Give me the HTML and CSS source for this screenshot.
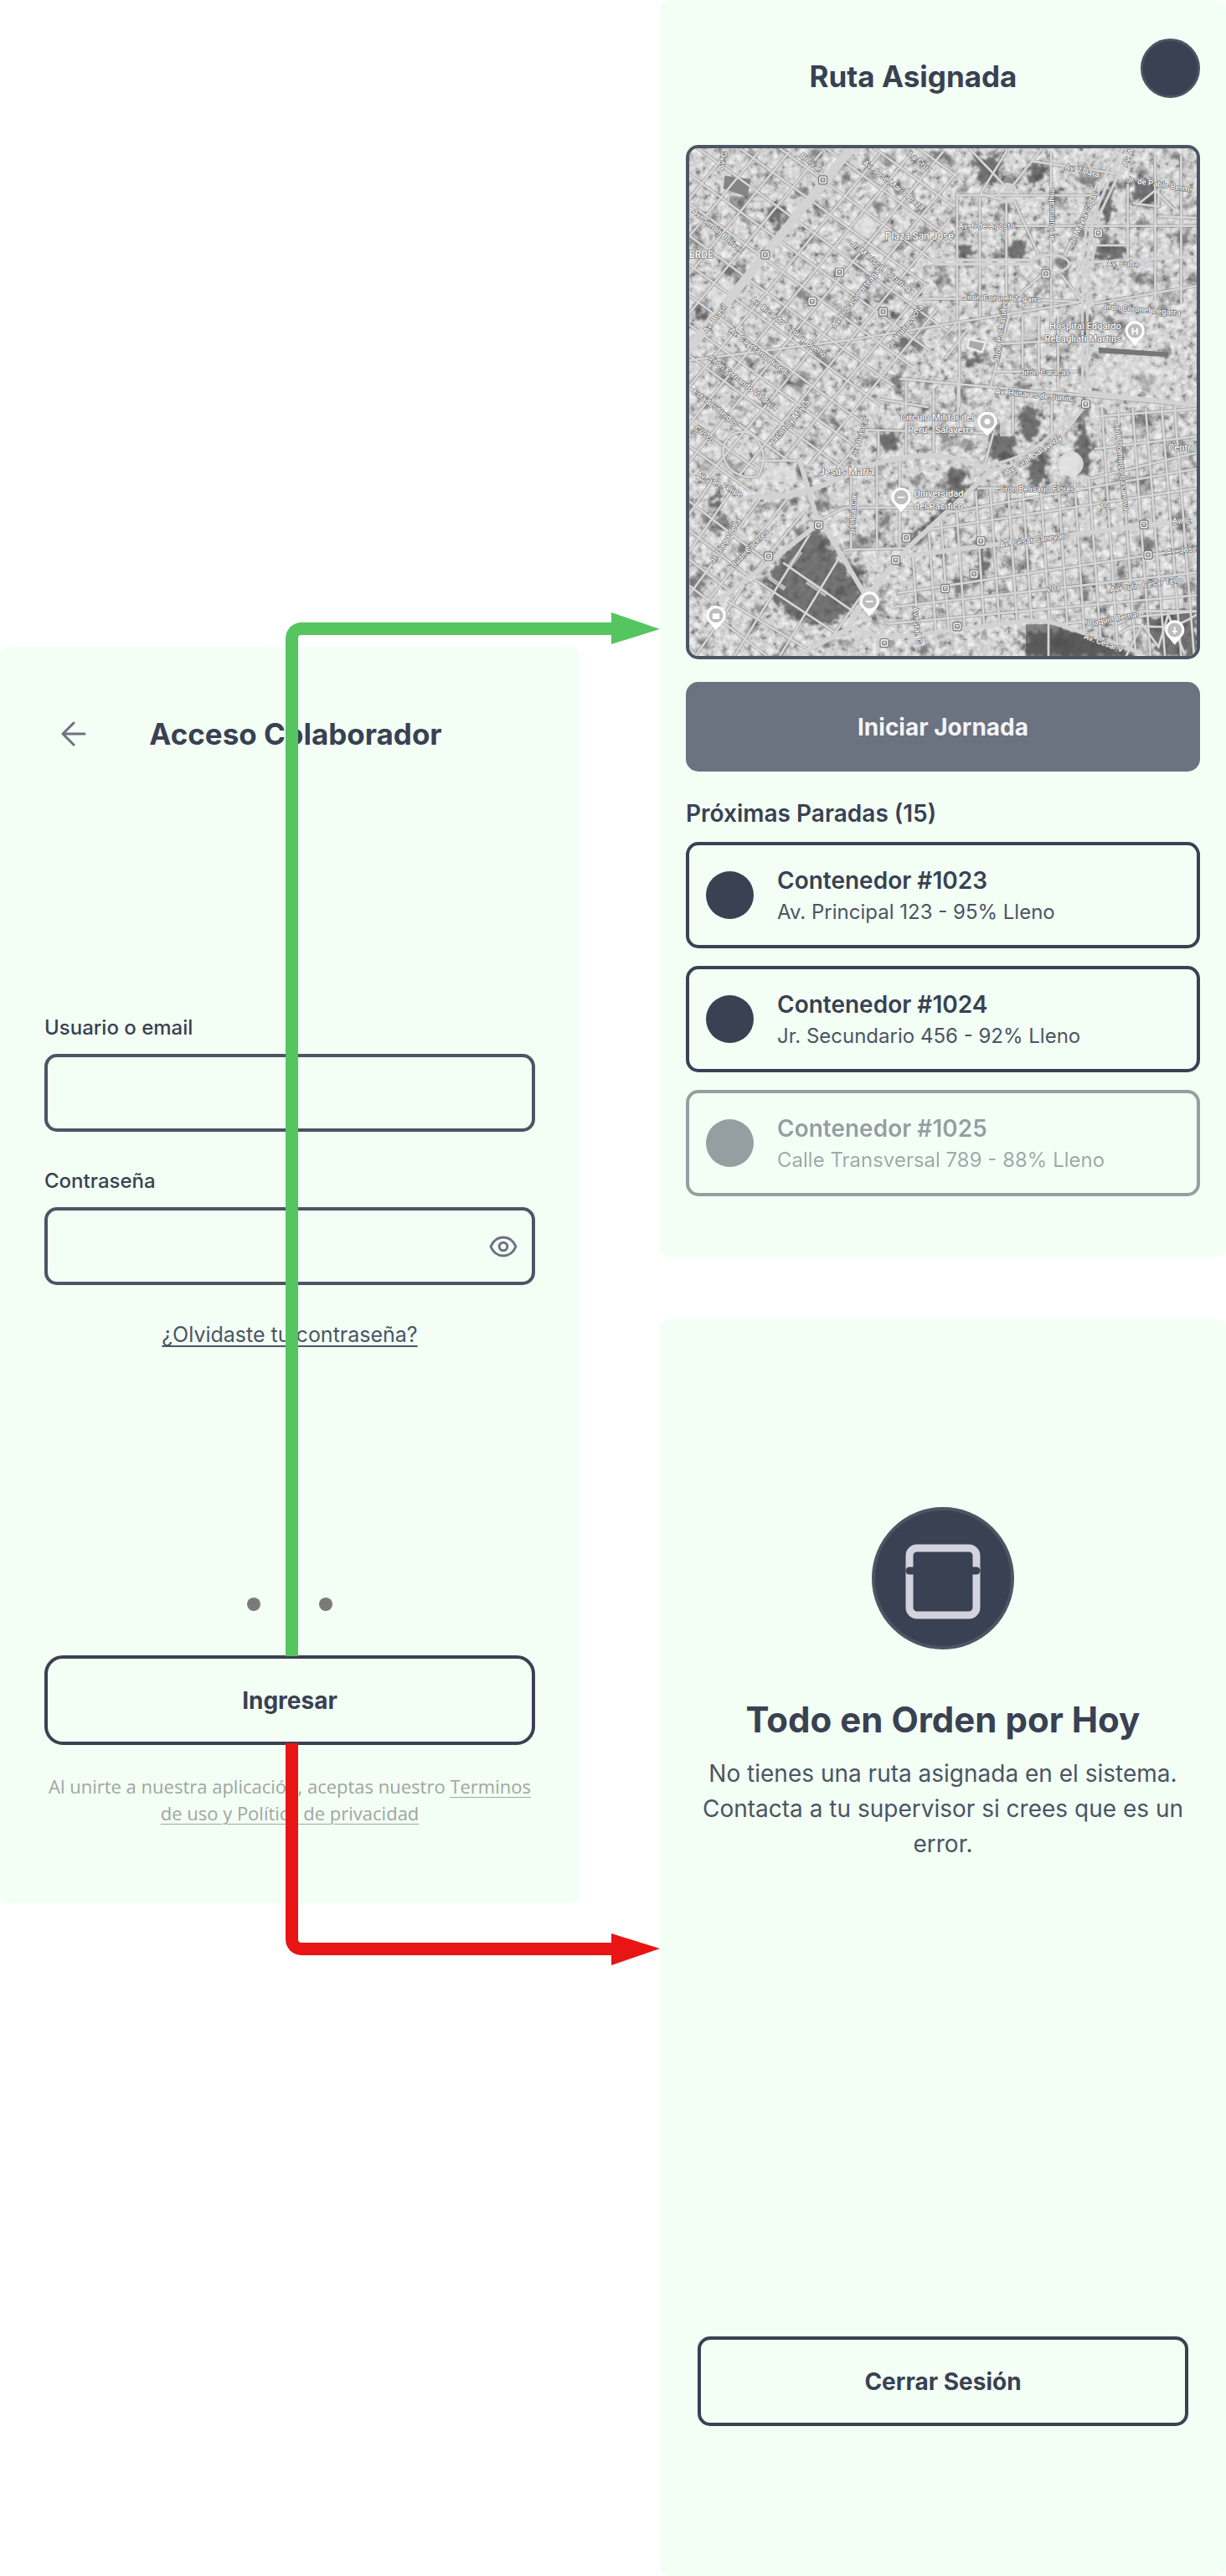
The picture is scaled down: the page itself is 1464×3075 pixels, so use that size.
FILE: index.html
```html
<!DOCTYPE html>
<html lang="es">
<head>
<meta charset="utf-8">
<meta name="viewport" content="width=device-width, initial-scale=1">
<title>Flujo de acceso del colaborador</title>
<link rel="stylesheet" href="styles.css">
</head>
<body>
<main class="flow">
  <div class="column column-start">
    <section class="screen login">
      <header class="login-header">
        <button class="back" type="button" aria-label="Volver">
          <svg width="30" height="30" viewBox="0 0 30 30" fill="none" stroke="currentColor" stroke-width="3" stroke-linecap="round" stroke-linejoin="round"><path d="M28 15H2M15 28L2 15L15 2"/></svg>
        </button>
        <h1 class="title">Acceso Colaborador</h1>
      </header>
      <form class="form">
        <div class="field">
          <label class="label" for="user">Usuario o email</label>
          <input class="input" id="user" type="text">
        </div>
        <div class="field">
          <label class="label" for="pass">Contraseña</label>
          <div class="password">
            <input class="input" id="pass" type="password">
            <button class="eye" type="button" aria-label="Mostrar contraseña">
              <svg width="34" height="26" viewBox="0 0 34 26" fill="none" stroke="currentColor" stroke-width="3"><path d="M2 13C5 6 10.500 2 17 2S29 6 32 13C29 20 23.500 24 17 24S5 20 2 13Z" stroke-linejoin="round"/><circle cx="17" cy="13" r="4.800"/></svg>
            </button>
          </div>
        </div>
        <a class="forgot" href="#">¿Olvidaste tu contraseña?</a>
      </form>
      <div class="login-footer">
        <div class="dots"><span class="dot"></span><span class="dot"></span></div>
        <div class="action">
          <button class="button button-outline button-round" type="submit">Ingresar</button>
          <div class="link link-up"></div>
          <svg class="head head-up" width="58" height="38" viewBox="0 0 58 38"><path d="M0 0L58 20L0 38Z" fill="#55c560"/></svg>
          <div class="link link-down"></div>
          <svg class="head head-down" width="58" height="38" viewBox="0 0 58 38"><path d="M0 0L58 18L0 38Z" fill="#e91414"/></svg>
        </div>
        <p class="terms">Al unirte a nuestra aplicación, aceptas nuestro <a href="#">Terminos de uso y Política de privacidad</a></p>
      </div>
    </section>
  </div>

  <div class="column column-end">
    <section class="screen route">
      <header class="route-header">
        <h2 class="title">Ruta Asignada</h2>
        <span class="avatar"></span>
      </header>
      <div class="map">
        <svg viewBox="0 0 1568 1568" role="img" aria-label="Mapa de la ruta">
          <defs>
            <filter id="roofs" x="0" y="0" width="100%" height="100%" color-interpolation-filters="sRGB">
              <feTurbulence type="fractalNoise" baseFrequency="0.05" numOctaves="3" seed="8"/>
              <feColorMatrix values="1 0 0 0 0 1 0 0 0 0 1 0 0 0 0 0 0 0 0 1"/>
              <feComponentTransfer>
                <feFuncR type="table" tableValues=".4 .45 .55 .7 .79 .83 .87 .91 .94 .95 .95"/>
                <feFuncG type="table" tableValues=".4 .45 .55 .7 .79 .83 .87 .91 .94 .95 .95"/>
                <feFuncB type="table" tableValues=".4 .45 .55 .7 .79 .83 .87 .91 .94 .95 .95"/>
              </feComponentTransfer>
            </filter>
            <filter id="trees" x="0" y="0" width="100%" height="100%" color-interpolation-filters="sRGB">
              <feTurbulence type="fractalNoise" baseFrequency="0.016" numOctaves="4" seed="21"/>
              <feColorMatrix values="0 0 0 0 .3 0 0 0 0 .3 0 0 0 0 .3 5 0 0 0 -2.9"/>
            </filter>
            <filter id="rough" x="-10%" y="-10%" width="120%" height="120%">
              <feTurbulence type="fractalNoise" baseFrequency="0.05" numOctaves="3" seed="4"/>
              <feDisplacementMap in="SourceGraphic" scale="60" xChannelSelector="R" yChannelSelector="G"/>
              <feGaussianBlur stdDeviation="3"/>
            </filter>
            <clipPath id="west"><path d="M0 0H815L835 130L760 330L720 460L835 540L640 720L470 990L340 970L220 960L190 1060L0 1000Z"/></clipPath>
            <clipPath id="east"><path d="M780 1140L900 1050L1240 1020L1270 790L1568 800V1568H1420L1120 1460L600 1510L680 1260Z"/></clipPath>
            <clipPath id="southwest"><path d="M0 1000L190 1070L300 1080L400 1150L90 1390L0 1420Z"/></clipPath>
            <clipPath id="campus"><path d="M390 1180L550 1380L480 1500L300 1568H0V1450L110 1400Z"/></clipPath>
            <g id="pin"><path d="M0 40L-20 16A30 30 0 1 1 20 16Z" fill="#fff"/><circle cy="-6" r="22" fill="#bdbdbd"/></g>
            <g id="stop"><rect x="-13" y="-13" width="26" height="26" rx="6" fill="#f2f2f2" stroke="#777" stroke-width="3"/><rect x="-6" y="-6" width="12" height="12" rx="2" fill="none" stroke="#777" stroke-width="3"/><path d="M-6 1H6" stroke="#777" stroke-width="2"/></g>
            <g id="streets" fill="none">
              <g clip-path="url(#west)">
                <path d="M120 10L-700 1010M215 10L-605 1010M310 10L-510 1010M410 10L-410 1010M595 10L-225 1010M690 10L-130 1010M785 10L-35 1010M880 10L60 1010M975 10L155 1010M1070 10L250 1010M1165 10L345 1010M1260 10L440 1010"/>
                <path d="M0 -520L900 140M0 -420L900 240M0 -310L900 350M0 -205L900 455M0 -115L900 545M0 -20L900 640M0 80L900 740M0 170L900 830M0 270L900 930M0 360L900 1020M0 455L900 1115M0 545L900 1205M0 640L900 1300M0 740L900 1400M0 840L900 1500M0 920L900 1580"/>
              </g>
              <g clip-path="url(#east)">
                <path d="M600 1200L1568 1050M600 1160L1568 990M600 1380L1568 1235M600 1420L1568 1310M600 1470L1568 1380M1240 830L1568 805M1240 930L1568 890M1240 1020L1568 940M600 1520L1568 1430"/>
                <path d="M680 1100L712 1568M735 1100L767 1568M775 1100L807 1568M825 1100L857 1568M885 1050L917 1568M930 1050L965 1568M985 1050L1020 1568M1030 1040L1065 1568M1085 1030L1120 1568M1140 1030L1175 1568M1190 1020L1225 1568M1235 1020L1275 1568M1275 800L1325 1568M1325 800L1380 1568M1370 800L1425 1568M1410 800L1470 1568M1460 800L1520 1568M1500 800L1560 1568"/>
              </g>
              <g clip-path="url(#southwest)">
                <path d="M90 1000L-200 1420M170 1000L-120 1420M250 1040L-30 1420M320 1060L40 1420M390 1080L110 1420M0 1090L400 1400M0 1180L400 1490M0 1270L400 1580M0 1350L400 1660"/>
              </g>
              <g clip-path="url(#campus)">
                <path d="M200 1330L560 1568M290 1280L520 1440M120 1400L400 1568M60 1430L240 1568M380 1180L140 1568M460 1270L280 1568M540 1370L400 1568M240 1250L20 1568"/>
              </g>
              <path d="M828 145H1250M828 240H1568M980 10V0M828 10V0M828 140V530M898 150V520M980 160V460M1118 10V520M1355 110V350M1440 20V470M1520 20V480M1250 480L1568 425M1250 300H1350M1450 210L1568 215"/>
              <path d="M865 0L970 110M1090 0L1000 115M1005 165L1080 330M970 160L900 140M1150 390L1210 470M1090 390L1010 460M1160 330L1260 110M980 10L900 140M1060 40L1330 80M720 465H1000L1210 475M860 560L790 650M950 605L1200 590M1030 520V680M1080 520V690M1140 520V740M990 510L930 740M940 690H1200M835 540V800"/>
              <path d="M0 655L510 590L1210 475M650 712L1568 795M670 720V960M755 740V940M830 720V870M590 775L740 800M550 870L920 880M585 870V960M650 960V1240M940 880L915 970M580 960V1240M500 1010V1240M480 1240L680 1235M480 1110H760M890 1050L1220 1050M400 1150L480 1110M1120 760V900M1000 760V880"/>
              <path d="M105 930C110 880 170 860 200 890S240 960 215 1010C180 1030 100 1000 105 930ZM215 965H340"/>
              <path d="M1320 1470L1400 1430L1568 1430M1330 1500C1400 1440 1450 1520 1568 1440M1350 1568L1400 1470L1450 1540L1480 1440L1530 1560M1110 1460V1568M1390 170L1440 130L1500 190M1370 170L1450 180V90"/>
            </g>
            <g id="avenues" fill="none">
              <path d="M500 0L0 620" stroke-width="28"/>
              <path d="M760 345H1060M760 358H1060M1170 355L1568 335" stroke-width="9"/>
              <path d="M1340 0L1245 220L1230 350V480M1320 0L1230 220L1215 350V760M1365 0L1270 200L1245 350M1230 480V760" stroke-width="8"/>
              <path d="M190 1075C280 1085 360 1065 440 1030S600 955 710 950S860 970 930 995" stroke-width="16"/>
              <path d="M920 980C1040 960 1140 890 1210 770M925 998C1060 970 1150 910 1225 790" stroke-width="9"/>
              <path d="M90 1400L400 1160M400 1160L340 960M400 1140L550 1390M550 1380L680 1230L930 1000M680 1258L1568 1145M480 1500L550 1380M330 1568L500 1480L600 1515" stroke-width="15"/>
              <path d="M600 1515L1040 1460Q1120 1455 1200 1490L1400 1560M1200 750L1568 795" stroke-width="13"/>
              <circle cx="983" cy="138" r="27" stroke-width="8"/>
              <ellipse cx="1115" cy="357" rx="58" ry="28" stroke-width="8"/>
            </g>
          </defs>
          <rect width="1568" height="1568" filter="url(#roofs)"/>
          <rect width="1568" height="1568" filter="url(#trees)" opacity=".6"/>
          <g fill="#4c4c4c" fill-opacity=".72" filter="url(#rough)">
            <path d="M350 1190L400 1165L450 1260L540 1360L500 1430L420 1480L300 1440L230 1340Z"/>
            <path d="M250 180H290V240H250ZM870 20L960 20V110H900ZM1050 40L1100 60L1060 130ZM830 300H880V340H830ZM990 290H1040V345H990ZM1260 290H1340V345H1260ZM1280 130L1310 110V220H1270ZM1370 100H1440L1450 170L1380 180Z"/>
            <path d="M1040 1490H1200L1380 1568H1040ZM1400 1450L1568 1420V1568H1450ZM930 880H1010V970H930ZM590 880H645V930H590ZM1200 840H1235V1010H1200ZM1050 960H1100V1040H1050ZM800 990H850V1060H800ZM890 1240H925V1320H890ZM1020 800H1080V900H1020ZM340 970L380 1030V1050L340 1010Z"/>
            <path d="M620 500L655 520L630 535ZM640 590H680V620H640ZM850 640H910V670H850ZM20 500H60V530H20ZM60 1080H100V1120H60ZM100 340L150 380L120 400ZM860 1040L900 1030L700 1210L690 1190ZM470 1230L540 1330L520 1350Z"/>
          </g>
          <path d="M1040 1490V1568H1380L1200 1500L1120 1470H1040Z" fill="#4c4c4c" fill-opacity=".6"/>
          <g fill="#e3e3e3" opacity=".9">
            <path d="M500 220L550 200L580 250L530 280ZM240 340L325 385L310 400L230 360ZM60 440L120 410L140 430L90 490ZM1320 140L1350 130V180H1320ZM960 840H995V890H960ZM1465 1365L1525 1360V1420H1465ZM240 980H330V1030H240ZM140 1410L190 1440L170 1460ZM300 1290L340 1240L350 1250L312 1300ZM370 1330L430 1370L420 1385L360 1345ZM250 1320L300 1355L292 1366L242 1330Z" fill-opacity=".75"/>
            <path d="M1250 650H1490L1500 740H1240Z" fill-opacity=".35"/>
            <circle cx="1180" cy="975" r="38"/>
          </g>
          <path d="M1265 615L1480 630V645L1265 632Z" fill="#777"/>
          <path d="M110 85L190 95L180 150L105 125Z" fill="#858585"/>
          <path d="M865 590L915 600L905 630L860 615Z" fill="#aaa" stroke="#eee" stroke-width="6"/>
          <use href="#streets" stroke="#666" stroke-opacity=".38" stroke-width="12"/>
          <use href="#streets" stroke="#d6d6d6" stroke-width="7"/>
          <use href="#avenues" stroke="#d3d3d3"/>
          <g class="map-labels">
            <text x="605" y="281" class="area">Plaza San José</text>
            <text x="0" y="338" class="area">ERDE</text>
            <text x="402" y="1010" class="area">Jesus Maria</text>
            <text x="832" y="248">Av. 6 de Agosto</text>
            <text x="1290" y="366">Av. Cuba</text>
            <text x="845" y="468" transform="rotate(2 845 468)">Jirón Coronel Zegarra</text>
            <text x="1275" y="496" transform="rotate(5 1275 496)">Jirón Coronel Zegarra</text>
            <text x="1335" y="560" text-anchor="end" class="place">Hospital Edgardo</text>
            <text x="1335" y="598" text-anchor="end" class="place">Rebagliati Martins</text>
            <text x="880" y="842" text-anchor="end" class="place">Círculo Militar del</text>
            <text x="880" y="880" text-anchor="end" class="place">Perú - Salaverry</text>
            <text x="695" y="1076" class="place">Universidad</text>
            <text x="695" y="1114" class="place">del Pacífico</text>
            <text x="1480" y="933" class="place">Centro</text>
            <text x="1022" y="700">Jirón Caracas</text>
            <text x="945" y="758" transform="rotate(6 945 758)">Av. Húsares de Junín</text>
            <text x="955" y="1060">Jirón Belisario Flores</text>
            <text x="960" y="1233" transform="rotate(-8 960 1233)">Av. César Canevaro</text>
            <text x="1302" y="1372" transform="rotate(-8 1302 1372)">Av. Julio César Tello</text>
            <text x="1492" y="1158">Av. C</text>
            <text x="1475" y="1254" transform="rotate(-5 1475 1254)">Av. José</text>
            <text x="1225" y="1478" transform="rotate(-11 1225 1478)">Joaquín Bernal</text>
            <text x="1218" y="1514" transform="rotate(20 1218 1514)">Av. César V</text>
            <text x="1105" y="1370">201</text>
            <text x="1268" y="1116">15</text>
            <text x="1160" y="64" transform="rotate(14 1160 64)">Av. Talara</text>
            <text x="1350" y="104" transform="rotate(9 1350 104)">Jr. de Pablo Berm</text>
            <text x="1352" y="58" transform="rotate(-66 1352 58)">Av. A</text>
            <text x="1127" y="290" transform="rotate(-90 1127 290)">Jr. Pumacahua</text>
            <text x="1188" y="300" transform="rotate(-65 1188 300)">Jr. Mayta Cápac</text>
            <text x="957" y="662" transform="rotate(-82 957 662)">Jirón Pachacútec</text>
            <text x="535" y="48" transform="rotate(38 535 48)">Av. José María Plaza</text>
            <text x="675" y="22" transform="rotate(38 675 22)">La Cruz</text>
            <text x="497" y="298" transform="rotate(39 497 298)">Jr. Mariscal Luzuriaga</text>
            <text x="8" y="198" transform="rotate(40 8 198)">Av. Simón Bolívar</text>
            <text x="106" y="68" transform="rotate(-78 106 68)">Av. G</text>
            <text x="340" y="26" transform="rotate(38 340 26)">Bolívar</text>
            <text x="55" y="572" transform="rotate(-53 55 572)">Av. Brasil</text>
            <text x="188" y="470" transform="rotate(38 188 470)">Av. Ricardo Tizón y Bueno</text>
            <text x="122" y="565" transform="rotate(38 122 565)">Av. Cayetano Heredia</text>
            <text x="58" y="650" transform="rotate(38 58 650)">Jirón Fernando Valdivia</text>
            <text x="8" y="754" transform="rotate(38 8 754)">Estados Unidos</text>
            <text x="15" y="868" transform="rotate(38 15 868)">Cusco</text>
            <text x="452" y="556" transform="rotate(-52 452 556)">Av. Horacio Urteaga</text>
            <text x="625" y="618" transform="rotate(-52 625 618)">Jr. Huiracocha</text>
            <text x="258" y="920" transform="rotate(-49 258 920)">Jacinto y Mayta</text>
            <text x="518" y="955" transform="rotate(-74 518 955)">Jr. Huáscar</text>
            <text x="512" y="1196" transform="rotate(-88 512 1196)">Jr. Huáscar</text>
            <text x="20" y="1010" transform="rotate(26 20 1010)">Av. San Felipe</text>
            <text x="75" y="1284" transform="rotate(-57 75 1284)">Jr. Diego de la</text>
            <text x="140" y="1296" transform="rotate(-46 140 1296)">Juan Cáceres</text>
            <text x="984" y="1010" transform="rotate(-33 984 1010)">Av. Gral. Salaverry</text>
            <text x="1313" y="842" transform="rotate(84 1313 842)">Jirón Domingo Casanova</text>
            <text x="690" y="1418" transform="rotate(84 690 1418)">Av. Gral. G</text>
          </g>
          <g>
            <use href="#stop" x="413" y="98"/><use href="#stop" x="235" y="329"/><use href="#stop" x="464" y="383"/><use href="#stop" x="380" y="473"/><use href="#stop" x="599" y="505"/><use href="#stop" x="1264" y="262"/><use href="#stop" x="1102" y="388"/><use href="#stop" x="1225" y="790"/><use href="#stop" x="400" y="1164"/><use href="#stop" x="245" y="1260"/><use href="#stop" x="671" y="1203"/><use href="#stop" x="638" y="1272"/><use href="#stop" x="901" y="1213"/><use href="#stop" x="880" y="1315"/><use href="#stop" x="791" y="1360"/><use href="#stop" x="828" y="1477"/><use href="#stop" x="603" y="1528"/><use href="#stop" x="1405" y="1162"/><use href="#stop" x="1418" y="1256"/>
          </g>
          <use href="#pin" x="1377" y="570"/><use href="#pin" x="921" y="850"/><use href="#pin" x="655" y="1084"/><use href="#pin" x="557" y="1406"/><use href="#pin" x="83" y="1449"/><use href="#pin" x="1500" y="1494"/>
          <path d="M1370 555V575M1384 555V575M1370 565H1384M644 1078H666M546 1400H568M1500 1478V1500M1492 1492H1508" stroke="#fff" stroke-width="5"/>
          <circle cx="921" cy="844" r="9" fill="#fff"/>
          <path d="M72 1437H94V1454H72Z" fill="#fff"/>
        </svg>
      </div>
      <button class="button button-solid" type="button">Iniciar Jornada</button>
      <h3 class="subtitle">Próximas Paradas (15)</h3>
      <ul class="stops">
        <li class="stop"><span class="marker"></span><div><h4 class="stop-name">Contenedor #1023</h4><p class="stop-info">Av. Principal 123 - 95% Lleno</p></div></li>
        <li class="stop"><span class="marker"></span><div><h4 class="stop-name">Contenedor #1024</h4><p class="stop-info">Jr. Secundario 456 - 92% Lleno</p></div></li>
        <li class="stop stop-later"><span class="marker"></span><div><h4 class="stop-name">Contenedor #1025</h4><p class="stop-info">Calle Transversal 789 - 88% Lleno</p></div></li>
      </ul>
    </section>

    <section class="screen done">
      <div class="badge">
        <svg width="90" height="90" viewBox="0 0 90 90" fill="none" stroke-width="9" stroke-linecap="round"><rect x="5" y="5" width="80" height="80" rx="9" stroke="#d1d3dd"/><path d="M5 32H85" stroke="#394152"/></svg>
      </div>
      <h2 class="done-title">Todo en Orden por Hoy</h2>
      <p class="done-text">No tienes una ruta asignada en el sistema. Contacta a tu supervisor si crees que es un error.</p>
      <button class="button button-outline logout" type="button">Cerrar Sesión</button>
    </section>
  </div>
</main>
</body>
</html>
```
FILE: styles.css
```css
* {
  box-sizing: border-box;
}

body {
  margin: 0;
  background: #fff;
  color: #394152;
  font-family: Inter, "Liberation Sans", sans-serif;
}

h1, h2, h3, h4, p, ul {
  margin: 0;
  padding: 0;
}

button {
  font: inherit;
  cursor: pointer;
}

.flow {
  display: grid;
  grid-template-columns: minmax(0, 692fr) minmax(0, 676fr);
  column-gap: 96px;
  align-items: start;
}

.column-start {
  padding-top: 772px;
}

.column-end {
  display: grid;
  gap: 75px;
}

.screen {
  display: flex;
  flex-direction: column;
  min-height: 1500px;
  border-radius: 12px;
  background: #f3fff5;
}

.title {
  font-size: 35px;
  line-height: 52px;
  font-weight: 700;
  text-align: center;
}

.button {
  width: 100%;
  height: 107px;
  border-radius: 15px;
  font-size: 28px;
  font-weight: 700;
}

.button-outline {
  border: 4px solid #394152;
  background: transparent;
  color: #394152;
}

.button-round {
  display: block;
  border-radius: 22px;
}

.button-solid {
  border: 0;
  background: #6b7280;
  color: #f3f4f6;
}

/* Login */
.login {
  padding: 78px 53px 92px;
}

.login-header {
  display: grid;
  grid-template-columns: 70px 1fr 56px;
  align-items: center;
}

.back {
  display: flex;
  padding: 0 20px;
  border: 0;
  background: none;
  color: #6b7280;
}

.form {
  display: flex;
  flex-direction: column;
  gap: 43px;
  margin-top: 309px;
}

.field {
  display: flex;
  flex-direction: column;
  gap: 15px;
}

.label {
  font-size: 24px;
  line-height: 32px;
  font-weight: 500;
}

.input {
  display: block;
  width: 100%;
  height: 93px;
  padding: 0 24px;
  border: 4px solid #4b5563;
  border-radius: 15px;
  background: transparent;
  font: inherit;
  font-size: 24px;
}

.password {
  position: relative;
}

.eye {
  position: absolute;
  top: 50%;
  right: 21px;
  display: flex;
  padding: 0;
  border: 0;
  background: none;
  color: #6b7280;
  transform: translateY(-50%);
}

.forgot {
  align-self: center;
  color: #4b5563;
  font-size: 25px;
  line-height: 32px;
  text-decoration-thickness: 2px;
  text-underline-offset: 4px;
  text-decoration-skip-ink: none;
}

.login-footer {
  margin-top: auto;
}

.dots {
  display: flex;
  justify-content: center;
  gap: 70px;
  margin-bottom: 53px;
}

.dot {
  width: 16px;
  height: 16px;
  border-radius: 50%;
  background: #7a7a7a;
}

.action {
  position: relative;
}

.terms {
  margin-top: 33px;
  color: #a0a5a1;
  font-family: "Open Sans", "Noto Sans", sans-serif;
  font-size: 22px;
  line-height: 32px;
  font-weight: 500;
  text-align: center;
}

.terms a {
  color: inherit;
  text-decoration-thickness: 1px;
  text-underline-offset: 4px;
}

/* Connectors from the button to the next screens */
.link {
  position: absolute;
  left: calc(50% - 5px);
  right: -92px;
  border: 0 solid;
  pointer-events: none;
}

.link-up {
  bottom: calc(100% - 1px);
  height: 1234px;
  border-width: 15px 0 0 15px;
  border-color: #55c560;
  border-top-left-radius: 19px;
}

.link-down {
  top: calc(100% - 2px);
  height: 253px;
  border-width: 0 0 15px 15px;
  border-color: #e91414;
  border-bottom-left-radius: 19px;
}

.head {
  position: absolute;
  right: -149px;
}

.head-up {
  bottom: calc(100% + 1207px);
}

.head-down {
  top: calc(100% + 225px);
}

/* Assigned route */
.route {
  padding: 46px 31px 0;
}

.route-header {
  display: flex;
  align-items: flex-end;
}

.route-header .title {
  flex: 1;
}

.avatar {
  width: 71px;
  height: 71px;
  border: 3px solid #4b5563;
  border-radius: 50%;
  background: #394152;
}

.map {
  aspect-ratio: 1;
  margin: 56px 0 27px;
  border: 4px solid #4b5563;
  border-radius: 15px;
  overflow: hidden;
}

.map svg {
  display: block;
  width: 100%;
  height: 100%;
}

.map-labels {
  fill: #fff;
  stroke: #5a5a5a;
  stroke-width: 3px;
  paint-order: stroke;
  font-family: Roboto, "Liberation Sans", sans-serif;
  font-size: 25px;
  font-weight: 500;
}

.map-labels .area {
  font-size: 31px;
}

.map-labels .place {
  font-size: 29px;
}

.subtitle {
  margin: 30px 0 14px;
  font-size: 28px;
  line-height: 40px;
  font-weight: 600;
}

.stops {
  display: grid;
  gap: 21px;
  list-style: none;
}

.stop {
  display: flex;
  align-items: center;
  gap: 28px;
  height: 127px;
  padding: 0 20px;
  border: 4px solid #394152;
  border-radius: 15px;
}

.stop-later {
  opacity: .5;
}

.marker {
  width: 57px;
  height: 57px;
  border-radius: 50%;
  background: #394152;
}

.stop-name {
  font-size: 28px;
  line-height: 40px;
  font-weight: 600;
}

.stop-info {
  color: #4b5563;
  font-size: 24px;
  line-height: 36px;
}

/* No route today */
.done {
  align-items: center;
  padding: 224px 45px 179px;
}

.badge {
  display: grid;
  place-items: center;
  width: 170px;
  height: 170px;
  padding-top: 8px;
  border: 4px solid #4b5563;
  border-radius: 50%;
  background: #394152;
}

.done-title {
  margin: 56px 0 15px;
  font-size: 42px;
  line-height: 56px;
  font-weight: 700;
}

.done-text {
  color: #4b5563;
  font-size: 28px;
  line-height: 42px;
  text-align: center;
}

.logout {
  margin-top: auto;
}
```
